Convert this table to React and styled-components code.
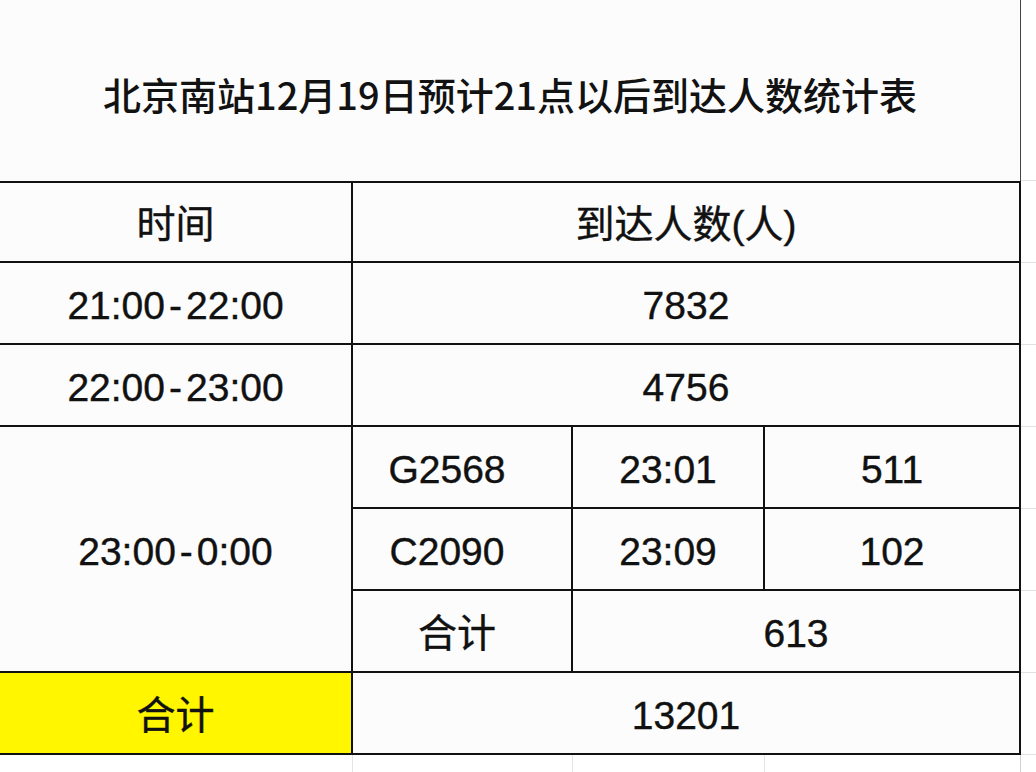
import styled, { createGlobalStyle } from "styled-components";

const GlobalStyle = createGlobalStyle`
  html, body {
    margin: 0;
    padding: 0;
    background: #ffffff;
  }
  * {
    box-sizing: border-box;
  }
`;

const rows = [
  { from: "21:00", to: "22:00", count: "7832" },
  { from: "22:00", to: "23:00", count: "4756" },
];

const trains = [
  { no: "G2568", at: "23:01", count: "511" },
  { no: "C2090", at: "23:09", count: "102" },
];

const Span = ({ from, to }) => (
  <>
    {from}
    <Dash>-</Dash>
    {to}
  </>
);

const App = () => {
  return (
    <Page>
      <GlobalStyle />
      <Sheet>
        <TitleCell>北京南站12月19日预计21点以后到达人数统计表</TitleCell>
        <Gutter />

        <Cell $top>时间</Cell>
        <Cell $top $span={3}>到达人数(人)</Cell>
        <Gutter />

        {rows.map((r) => (
          <Row key={r.from} row={r} />
        ))}

        <Cell $rows={3}>
          <Span from="23:00" to="0:00" />
        </Cell>
        {trains.map((t) => (
          <TrainRow key={t.no} train={t} />
        ))}
        <Cell $shift={10}>合计</Cell>
        <Cell $span={2}>613</Cell>
        <Gutter />

        <Cell $yellow>合计</Cell>
        <Cell $span={3}>13201</Cell>
        <Gutter />

        <Filler $line />
        <Filler $line />
        <Filler $line />
        <Filler $line $dark />
        <Filler />
      </Sheet>
    </Page>
  );
};

const Row = ({ row }) => (
  <>
    <Cell>
      <Span from={row.from} to={row.to} />
    </Cell>
    <Cell $span={3}>{row.count}</Cell>
    <Gutter />
  </>
);

const TrainRow = ({ train }) => (
  <>
    <Cell $shift={30}>{train.no}</Cell>
    <Cell>{train.at}</Cell>
    <Cell>{train.count}</Cell>
    <Gutter />
  </>
);

export default App;

const Page = styled.div`
  width: 1036px;
  height: 772px;
  overflow: hidden;
  background: #ffffff;
`;

const Sheet = styled.div`
  display: grid;
  grid-template-columns: 353px 220px 192px 256px 1fr;
  grid-template-rows: 181px repeat(7, 82px) 1fr;
  height: 772px;
  font-family: "Liberation Sans", "Noto Sans CJK SC", sans-serif;
  color: #111111;
`;

const TitleCell = styled.div`
  grid-column: span 4;
  display: flex;
  align-items: center;
  justify-content: center;
  padding-top: 6px;
  background: #fcfcfc;
  border-right: 1px solid #444444;
  font-family: "Noto Sans CJK SC", sans-serif;
  font-size: 38px;
  font-weight: 500;
  color: #121212;
`;

const Cell = styled.div`
  grid-column: span ${(p) => p.$span || 1};
  grid-row: span ${(p) => p.$rows || 1};
  display: flex;
  align-items: center;
  justify-content: center;
  padding-top: 5px;
  padding-right: ${(p) => p.$shift || 0}px;
  background: ${(p) => (p.$yellow ? "#fff600" : "#fcfcfc")};
  border-right: 2px solid #111111;
  border-bottom: 2px solid #111111;
  border-top: ${(p) => (p.$top ? "2px solid #111111" : "none")};
  font-size: 39px;
  line-height: 1;
  -webkit-text-stroke: 0.4px #111111;
`;

const Dash = styled.span`
  margin: 0 4px;
`;

const Gutter = styled.div`
  background: #ffffff;
  border-bottom: 1px solid #e2e2e2;
`;

const Filler = styled.div`
  background: #ffffff;
  border-right: ${(p) =>
    p.$line ? `1px solid ${p.$dark ? "#d2d2d2" : "#e4e4e4"}` : "none"};
`;
